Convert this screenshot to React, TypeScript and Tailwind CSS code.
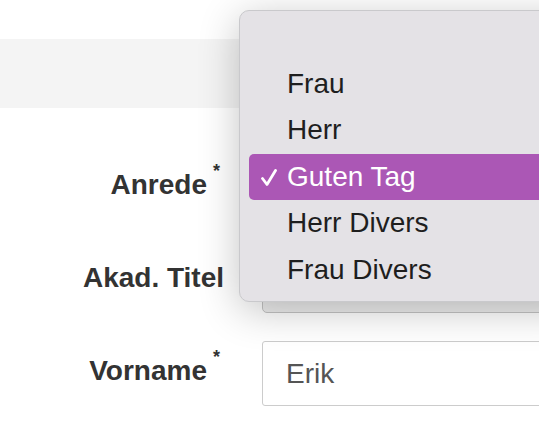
export default function App() {
  const options = ['', 'Frau', 'Herr', 'Guten Tag', 'Herr Divers', 'Frau Divers']
  const selected = 'Guten Tag'

  return (
    <div className="relative w-[539px] h-[428px] overflow-hidden bg-white font-['Liberation_Sans',Arial,sans-serif]">
      {/* top band */}
      <div className="h-[39px]" />
      <div className="h-[69px] bg-[#f4f4f4]" />

      {/* form rows */}
      <div className="mt-[47px] flex flex-col gap-[28px]">
        <FormRow label="Anrede" required>
          <div className="h-[65px] w-[400px] rounded-[5px] border border-[#c4c4c4] bg-[#ededed]" />
        </FormRow>
        <FormRow label="Akad. Titel">
          <div className="h-[65px] w-[400px] rounded-[5px] border border-[#c4c4c4] bg-[#ededed]" />
        </FormRow>
        <FormRow label="Vorname" required>
          <div className="flex h-[65px] w-[400px] items-center rounded-[3px] border border-[#cccccc] bg-white pl-[23px] text-[28px] text-[#555555]">
            Erik
          </div>
        </FormRow>
      </div>

      {/* open select menu */}
      <div className="absolute left-[239px] top-[10px] h-[292px] w-[340px] rounded-[10px] border border-[#c9c9cc] bg-[#e4e2e6] pt-[3px] pl-[9px] shadow-[0_8px_40px_rgba(0,0,0,0.24)]">
        {options.map((opt) => (
          <div
            key={opt || 'empty'}
            className={
              opt === selected
                ? 'flex h-[46.5px] items-center rounded-[5px] bg-[#ab57b5] text-[28px] text-white'
                : 'flex h-[46.5px] items-center text-[28px] text-[#1e1e1e]'
            }
          >
            <span className="flex w-[38px] justify-center">
              {opt === selected && (
                <svg width="16" height="17" viewBox="0 0 16 17" fill="none" className="ml-[2px] mt-[1px]">
                  <path d="M1.5 9.5 L6 15.5 L14.5 1.5" stroke="white" strokeWidth="2.8" strokeLinecap="round" strokeLinejoin="round" />
                </svg>
              )}
            </span>
            <span className="leading-none">{opt}</span>
          </div>
        ))}
      </div>
    </div>
  )
}

function FormRow({ label, required, children }: { label: string; required?: boolean; children: React.ReactNode }) {
  return (
    <div className="flex h-[65px] items-center">
      <div className="flex w-[224px] shrink-0 justify-end whitespace-nowrap pb-[5px] text-[28px] font-bold text-[#333333]">
        <span>{label}</span>
        {required && <span className="ml-[6px] -mt-[2px] w-[11px] text-[18px] leading-none">*</span>}
      </div>
      <div className="ml-[38px] shrink-0">{children}</div>
    </div>
  )
}
